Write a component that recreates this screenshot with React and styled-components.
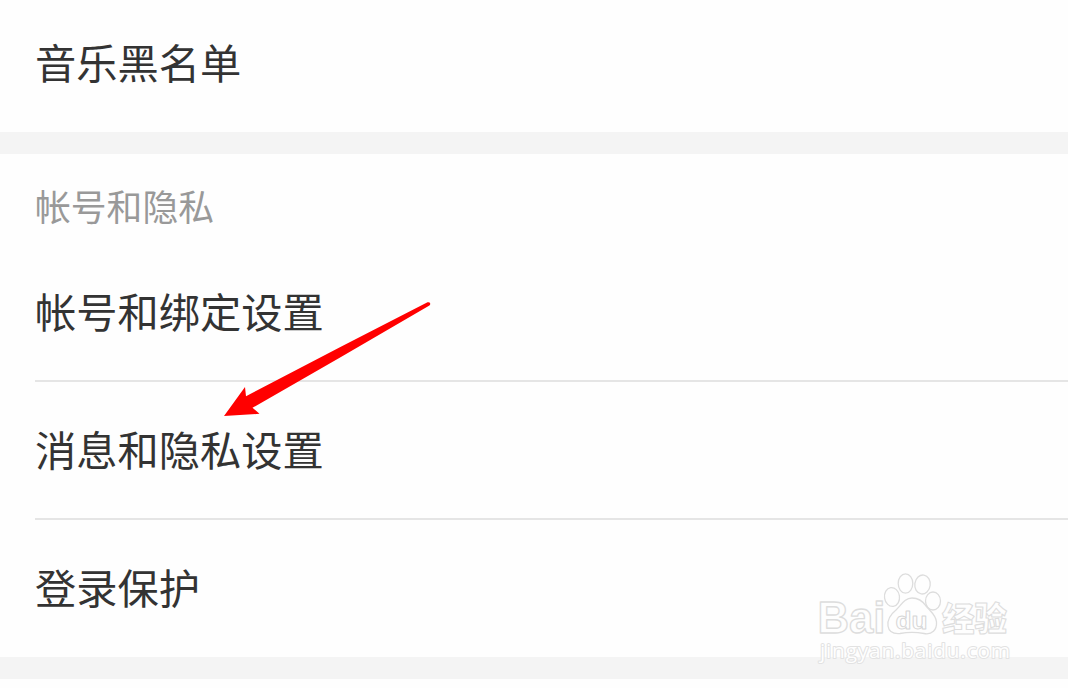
import React from 'react'
import styled, { createGlobalStyle } from 'styled-components'

const GlobalStyle = createGlobalStyle`
body {
    margin: 0;
    background: #fefefe;
    overflow: hidden;
}
`
const Page = styled.main`
position: relative;
width: 1068px;
height: 688px;
overflow: hidden;
background: #fefefe;
font-family: "Noto Sans CJK SC", "Noto Sans", sans-serif;
`
const Section = styled.section`
display: flex;
flex-direction: column;
padding-left: 35px;
`
const Gap = styled.div`
height: 22px;
background: #f4f4f4;
`
const SectionTitle = styled.h2`
margin: 0;
height: 88px;
padding-top: 15px;
box-sizing: border-box;
font-size: 35.8px;
line-height: 72px;
font-weight: 400;
color: #999;
`
const Item = styled.div`
height: ${(props) => props.$height}px;
padding-top: ${(props) => props.$top}px;
box-sizing: border-box;
border-bottom: ${(props) => (props.$divider ? '2px solid #e5e5e5' : 'none')};
font-size: 41.25px;
line-height: 60px;
color: #333;
`
const Arrow = styled.svg`
position: absolute;
left: 220px;
top: 298px;
`
const Watermark = styled.svg`
position: absolute;
left: 810px;
top: 565px;
`

const PawLogo = () => (
  <Watermark width="212" height="110" viewBox="810 565 212 110">
    <g fill="#fefefe" stroke="#dddddd" strokeWidth="1.3" strokeLinejoin="round">
      <text x="817.5" y="632.5" fontFamily="Liberation Sans, Arial, sans-serif" fontWeight="700" fontSize="43.5" textLength="68" lengthAdjust="spacingAndGlyphs">Bai</text>
      <ellipse cx="905.5" cy="583.5" rx="7.3" ry="9.7" />
      <ellipse cx="922.5" cy="584.5" rx="7.7" ry="9.5" transform="rotate(8 922.5 584.5)" />
      <ellipse cx="892" cy="597" rx="7.5" ry="9.5" transform="rotate(-8 892 597)" />
      <ellipse cx="933" cy="601" rx="7.5" ry="9" />
      <path d="M912 598C905 598 901 605 896 610C891 614 887 619 888 626C889 633 894 634 900 633.5C908 632 916 632 924 633.5C932 635 937 630 936.5 622C936 615 930 611 926 606C922 600 918 598 912 598Z" />
      <text x="895.5" y="628.5" fontFamily="Liberation Sans, Arial, sans-serif" fontWeight="700" fontSize="23" stroke="#d6d6d6" strokeWidth="0.9" textLength="32" lengthAdjust="spacingAndGlyphs">du</text>
      <text x="942" y="630.5" fontFamily="Noto Sans CJK SC, sans-serif" fontWeight="900" fontSize="33.5" strokeWidth="1.1" textLength="65" lengthAdjust="spacingAndGlyphs">经验</text>
    </g>
    <text x="820" y="658" fontFamily="Open Sans, Noto Sans, sans-serif" fontSize="20.8" textLength="190" lengthAdjust="spacing" fill="#fefefe" stroke="#e2e2e2" strokeWidth="2" strokeLinejoin="round" paintOrder="stroke">jingyan.baidu.com</text>
  </Watermark>
)

const App = () => {
  return (
    <Page>
      <GlobalStyle />
      <Section>
        <Item $height={132} $top={31}>音乐黑名单</Item>
      </Section>
      <Gap />
      <Section>
        <SectionTitle>帐号和隐私</SectionTitle>
        <Item $height={140} $top={38} $divider>帐号和绑定设置</Item>
        <Item $height={138} $top={36} $divider>消息和隐私设置</Item>
        <Item $height={137} $top={36}>登录保护</Item>
      </Section>
      <Gap />
      <Arrow width="216" height="124" viewBox="220 298 216 124">
        <path
          d="M224 416L245 387L246 396.2Q336 349 427.5 302.3Q429.8 301.8 430.2 303.5Q430.5 305 429 305.8Q340 358 252.5 407.8L259.5 413.8Z"
          fill="#ff0000"
        />
      </Arrow>
      <PawLogo />
    </Page>
  )
}

export default App
